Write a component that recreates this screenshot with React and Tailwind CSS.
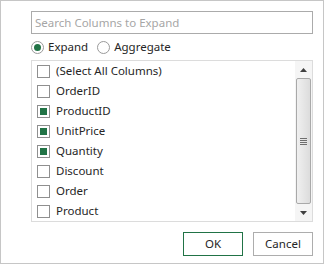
import React from "react";

const items = [
  ["(Select All Columns)", false],
  ["OrderID", false],
  ["ProductID", true],
  ["UnitPrice", true],
  ["Quantity", true],
  ["Discount", false],
  ["Order", false],
  ["Product", false],
];

function Box({ checked }) {
  return (
    <div className="w-[13px] h-[13px] border border-[#8f8f8f] bg-white flex items-center justify-center shrink-0">
      {checked && <div className="w-[7px] h-[7px] bg-[#217346]" />}
    </div>
  );
}

function Radio({ checked }) {
  return (
    <div className="w-[13px] h-[13px] rounded-full border border-[#9a9a9a] bg-white flex items-center justify-center shrink-0">
      {checked && <div className="w-[7px] h-[7px] rounded-full bg-[#217346]" />}
    </div>
  );
}

export default function App() {
  return (
    <div
      className="w-[324px] h-[264px] border border-[#c6c6c6] bg-white pl-[30px] pr-[10px] pt-[10px] flex flex-col text-[11.5px] text-[#262626]"
      style={{ fontFamily: "'Noto Sans', 'Open Sans', sans-serif" }}
    >
      <div className="h-[23px] border border-[#ababab] flex items-center pl-[3px] text-[#a6a6a6]">
        Search Columns to Expand
      </div>
      <div className="h-[26px] flex items-center">
        <Radio checked />
        <span className="ml-[4px]">Expand</span>
        <div className="ml-[9px]">
          <Radio />
        </div>
        <span className="ml-[4px]">Aggregate</span>
      </div>
      <div className="h-[162px] border border-[#dcdcdc] flex">
        <div className="flex-1 flex flex-col">
          {items.map(([label, c]) => (
            <div key={label} className="h-[20px] flex items-center pl-[5px]">
              <Box checked={c} />
              <span className="ml-[6px] leading-none">{label}</span>
            </div>
          ))}
        </div>
        <div className="w-[17px] flex flex-col bg-[#f5f5f5]">
          <div className="h-[17px] flex items-center justify-center">
            <svg width="7" height="4" viewBox="0 0 7 4"><path d="M3.5 0L7 4H0z" fill="#404040" /></svg>
          </div>
          <div className="flex-1 mx-[1px] border border-[#a9a9a9] rounded-[2px] bg-gradient-to-r from-[#f0f0f0] to-[#dcdcdc] flex items-center justify-center">
            <div className="flex flex-col gap-[1px]">
              <div className="w-[7px] h-[1px] bg-[#6e6e6e]" />
              <div className="w-[7px] h-[1px] bg-[#6e6e6e]" />
              <div className="w-[7px] h-[1px] bg-[#6e6e6e]" />
              <div className="w-[7px] h-[1px] bg-[#6e6e6e]" />
            </div>
          </div>
          <div className="h-[17px] flex items-center justify-center">
            <svg width="7" height="4" viewBox="0 0 7 4"><path d="M0 0H7L3.5 4z" fill="#404040" /></svg>
          </div>
        </div>
      </div>
      <div className="flex justify-end gap-[10px] mt-[10px]">
        <div className="w-[60px] h-[24px] border border-[#217346] flex items-center justify-center">OK</div>
        <div className="w-[60px] h-[24px] border border-[#adadad] flex items-center justify-center">Cancel</div>
      </div>
    </div>
  );
}
